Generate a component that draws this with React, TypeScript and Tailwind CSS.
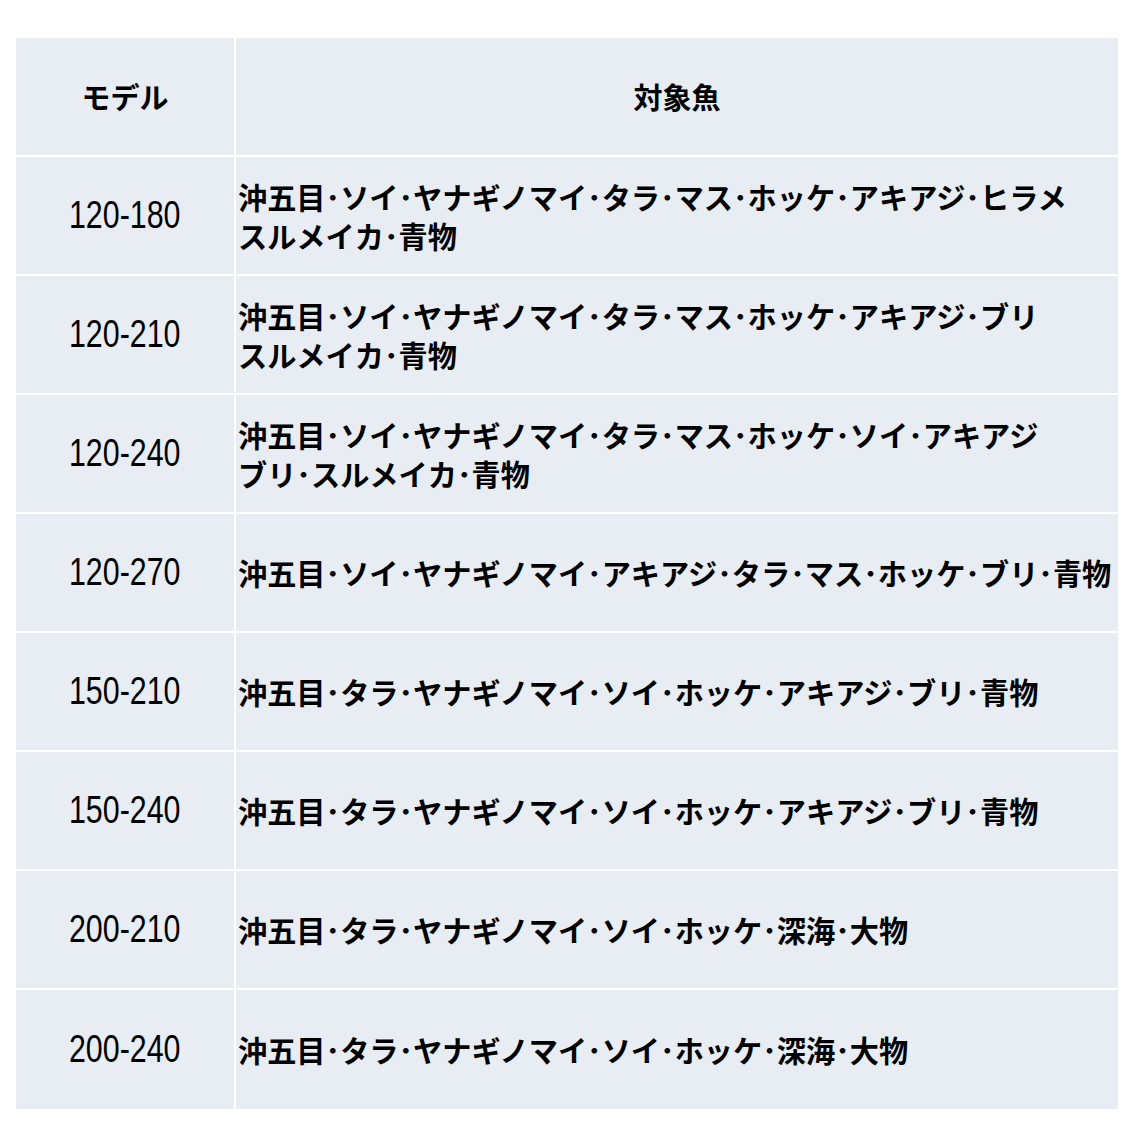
const rows: { model: string; lines: string[] }[] = [
  { model: "120-180", lines: ["沖五目･ソイ･ヤナギノマイ･タラ･マス･ホッケ･アキアジ･ヒラメ", "スルメイカ･青物"] },
  { model: "120-210", lines: ["沖五目･ソイ･ヤナギノマイ･タラ･マス･ホッケ･アキアジ･ブリ", "スルメイカ･青物"] },
  { model: "120-240", lines: ["沖五目･ソイ･ヤナギノマイ･タラ･マス･ホッケ･ソイ･アキアジ", "ブリ･スルメイカ･青物"] },
  { model: "120-270", lines: ["沖五目･ソイ･ヤナギノマイ･アキアジ･タラ･マス･ホッケ･ブリ･青物"] },
  { model: "150-210", lines: ["沖五目･タラ･ヤナギノマイ･ソイ･ホッケ･アキアジ･ブリ･青物"] },
  { model: "150-240", lines: ["沖五目･タラ･ヤナギノマイ･ソイ･ホッケ･アキアジ･ブリ･青物"] },
  { model: "200-210", lines: ["沖五目･タラ･ヤナギノマイ･ソイ･ホッケ･深海･大物"] },
  { model: "200-240", lines: ["沖五目･タラ･ヤナギノマイ･ソイ･ホッケ･深海･大物"] },
];

const jp = "font-['Noto_Sans_CJK_JP',sans-serif]";
const num = "font-['Liberation_Sans','Noto_Sans_CJK_JP',sans-serif]";

export default function App() {
  return (
    <div className="min-h-[1134px] w-[1134px] bg-white pl-[16px] pt-[38px]">
      <div className="grid w-[1102px] grid-cols-[218px_882px] gap-[2px] bg-white text-black">
        <div className={`flex h-[117px] items-center justify-center bg-[#e8edf4] text-[29px] font-bold ${jp}`}>
          モデル
        </div>
        <div className={`flex h-[117px] items-center justify-center bg-[#e8edf4] text-[29px] font-bold ${jp}`}>
          対象魚
        </div>
        {rows.map((r, i) => {
          const h = i === rows.length - 1 ? "h-[119px]" : "h-[117px]";
          return (
            <div key={r.model} className="contents">
              <div className={`flex ${h} items-center justify-center bg-[#e8edf4] text-[38px] ${num}`}>
                <span className="inline-block scale-x-[0.8]">{r.model}</span>
              </div>
              <div
                className={`flex ${h} flex-col justify-center whitespace-nowrap bg-[#e8edf4] pl-[2px] text-[29.2px] font-bold leading-[39px] ${jp}`}
              >
                {r.lines.map((l) => (
                  <div key={l}>{l}</div>
                ))}
              </div>
            </div>
          );
        })}
      </div>
    </div>
  );
}
